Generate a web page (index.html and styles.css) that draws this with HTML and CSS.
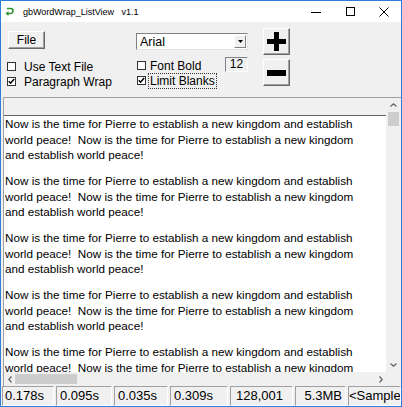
FILE: index.html
```html
<!DOCTYPE html>
<html lang="en">
<head>
    <meta charset="UTF-8">
    <meta name="viewport" content="width=device-width, initial-scale=1.0">
    <title>gbWordWrap_ListView</title>
    <link rel="stylesheet" href="styles.css">
</head>
<body>
<div class="window">
    <div class="titlebar">
        <svg class="app-icon" width="9" height="9" viewBox="0 0 9 9">
            <path d="M2 1.5 H5.5 A2.5 2.5 0 0 1 5.5 6.5 H3" fill="none" stroke="#2f8f2f" stroke-width="1.6"/>
            <polygon points="0.5,6.5 3.5,4 3.5,9" fill="#2f8f2f"/>
        </svg>
        <span class="title">gbWordWrap_ListView&nbsp;&nbsp;&nbsp;v1.1</span>
        <div class="caption-buttons">
            <span class="cap">
                <svg width="10" height="10" viewBox="0 0 10 10"><line x1="0" y1="5.5" x2="10" y2="5.5" stroke="#000" stroke-width="1"/></svg>
            </span>
            <span class="cap">
                <svg width="9" height="9" viewBox="0 0 9 9"><rect x="0.5" y="0.5" width="8" height="8" fill="none" stroke="#000" stroke-width="1"/></svg>
            </span>
            <span class="cap">
                <svg width="10" height="10" viewBox="0 0 10 10"><path d="M0.5 0.5 L9.5 9.5 M9.5 0.5 L0.5 9.5" stroke="#000" stroke-width="1"/></svg>
            </span>
        </div>
    </div>

    <div class="toolbar">
        <div class="col col-left">
            <button class="btn btn-file">File</button>
            <label class="check"><span class="box"></span><span class="label">Use Text File</span></label>
            <label class="check"><span class="box"><svg width="7" height="7" viewBox="0 0 7 7"><path d="M0.8 3.2 L2.6 5.2 L6.2 1" fill="none" stroke="#000" stroke-width="1.5"/></svg></span><span class="label">Paragraph Wrap</span></label>
        </div>
        <div class="col col-mid">
            <div class="combo">
                <span class="combo-text">Arial</span>
                <span class="combo-btn"><svg width="5" height="3" viewBox="0 0 5 3"><polygon points="0,0 5,0 2.5,3" fill="#000"/></svg></span>
            </div>
            <div class="row-bold">
                <label class="check"><span class="box"></span><span class="label">Font Bold</span></label>
                <span class="size-box">12</span>
            </div>
            <label class="check"><span class="box"><svg width="7" height="7" viewBox="0 0 7 7"><path d="M0.8 3.2 L2.6 5.2 L6.2 1" fill="none" stroke="#000" stroke-width="1.5"/></svg></span><span class="label focused">Limit Blanks</span></label>
        </div>
        <div class="col col-right">
            <button class="btn btn-big">
                <svg width="19" height="19" viewBox="0 0 19 19"><rect x="7" y="0" width="5" height="19" fill="#000"/><rect x="0" y="7" width="19" height="5" fill="#000"/></svg>
            </button>
            <button class="btn btn-big">
                <svg width="19" height="6" viewBox="0 0 19 6"><rect x="0" y="0" width="19" height="6" fill="#000"/></svg>
            </button>
        </div>
    </div>

    <div class="list-frame">
        <div class="list-header"></div>
        <div class="list-body">
            <p>Now is the time for Pierre to establish a new kingdom and establish world peace!&nbsp; Now is the time for Pierre to establish a new kingdom and establish world peace!</p>
            <p>Now is the time for Pierre to establish a new kingdom and establish world peace!&nbsp; Now is the time for Pierre to establish a new kingdom and establish world peace!</p>
            <p>Now is the time for Pierre to establish a new kingdom and establish world peace!&nbsp; Now is the time for Pierre to establish a new kingdom and establish world peace!</p>
            <p>Now is the time for Pierre to establish a new kingdom and establish world peace!&nbsp; Now is the time for Pierre to establish a new kingdom and establish world peace!</p>
            <p>Now is the time for Pierre to establish a new kingdom and establish world peace!&nbsp; Now is the time for Pierre to establish a new kingdom</p>
        </div>
        <div class="vscroll">
            <span class="arrow"><svg width="7" height="4" viewBox="0 0 7 4"><polyline points="0.5,3.5 3.5,0.8 6.5,3.5" fill="none" stroke="#606060" stroke-width="1.2"/></svg></span>
            <span class="vthumb"></span>
            <span class="track"></span>
            <span class="arrow"><svg width="7" height="4" viewBox="0 0 7 4"><polyline points="0.5,0.5 3.5,3.2 6.5,0.5" fill="none" stroke="#606060" stroke-width="1.2"/></svg></span>
        </div>
        <div class="hscroll">
            <span class="harrow"><svg width="4" height="7" viewBox="0 0 4 7"><polyline points="3.5,0.5 0.8,3.5 3.5,6.5" fill="none" stroke="#606060" stroke-width="1.2"/></svg></span>
            <span class="hthumb"></span>
            <span class="track"></span>
            <span class="harrow"><svg width="4" height="7" viewBox="0 0 4 7"><polyline points="0.5,0.5 3.2,3.5 0.5,6.5" fill="none" stroke="#606060" stroke-width="1.2"/></svg></span>
        </div>
        <div class="corner"></div>
    </div>

    <div class="statusbar">
        <span class="panel p1">0.178s</span>
        <span class="panel p2">0.095s</span>
        <span class="panel p3">0.035s</span>
        <span class="panel p4">0.309s</span>
        <span class="panel p5">128,001</span>
        <span class="panel p6">5.3MB</span>
        <span class="panel p7">&lt;Sample text&gt;</span>
    </div>
</div>
</body>
</html>
```

FILE: styles.css
```css
* {
    box-sizing: border-box;
}
body {
    margin: 0;
    background: #f0f0f0;
    font-family: "Liberation Sans", Arial, sans-serif;
    color: #000;
}
.window {
    width: 402px;
    height: 407px;
    border: 1px solid #2d7ed6;
    background: #f0f0f0;
    display: flex;
    flex-direction: column;
    overflow: hidden;
}

/* title bar */
.titlebar {
    flex: none;
    height: 21px;
    background: #fff;
    display: flex;
    align-items: center;
}
.app-icon {
    margin-left: 4px;
}
.title {
    margin-left: 9px;
    font-size: 9px;
}
.caption-buttons {
    margin-left: auto;
    display: flex;
}
.cap {
    width: 34px;
    height: 21px;
    display: flex;
    align-items: center;
    justify-content: center;
}

/* controls */
.toolbar {
    flex: none;
    height: 75px;
    display: flex;
}
.col {
    display: flex;
    flex-direction: column;
    align-items: flex-start;
}
.col-left {
    width: 135px;
    padding-left: 6px;
}
.col-mid {
    width: 127px;
}
.btn {
    font-family: "Liberation Sans", Arial, sans-serif;
    font-size: 12px;
    background: #f0f0f0;
    border: 1px solid;
    border-color: #fff #696969 #696969 #fff;
    box-shadow: inset -1px -1px #a0a0a0;
    padding: 0;
    display: flex;
    align-items: center;
    justify-content: center;
}
.btn-file {
    margin: 9px 0 0 1px;
    width: 37px;
    height: 18px;
}
.check {
    display: flex;
    align-items: center;
    height: 15px;
    font-size: 12px;
}
.col-left .check {
    gap: 6px;
}
.col-left .check:first-of-type {
    margin-top: 10px;
}
.col-mid .check {
    gap: 2px;
    margin-left: 1px;
}
.box {
    width: 9px;
    height: 9px;
    border: 1px solid #333;
    background: #fff;
    display: flex;
    align-items: center;
    justify-content: center;
}
.label {
    border: 1px dotted transparent;
    padding: 0 1px;
    line-height: 14px;
}
.label.focused {
    border-color: #333;
}
.combo {
    margin-top: 11px;
    width: 112px;
    height: 17px;
    background: #fff;
    border: 1px solid;
    border-color: #828282 #e3e3e3 #e3e3e3 #828282;
    display: flex;
    align-items: center;
}
.combo-text {
    flex: 1;
    padding-left: 3px;
    font-size: 12.5px;
}
.combo-btn {
    width: 12px;
    height: 13px;
    margin-right: 1px;
    background: #f0f0f0;
    border: 1px solid;
    border-color: #fff #828282 #828282 #fff;
    display: flex;
    align-items: center;
    justify-content: center;
}
.row-bold {
    margin-top: 7px;
    width: 112px;
    height: 16px;
    display: flex;
    align-items: flex-end;
    justify-content: space-between;
}
.size-box {
    align-self: flex-start;
    width: 23px;
    height: 15px;
    border: 1px solid;
    border-color: #828282 #fff #fff #828282;
    font-size: 12px;
    line-height: 13px;
    text-align: center;
}
.col-right {
    padding-top: 6px;
    gap: 4px;
}
.btn-big {
    width: 27px;
    height: 27px;
}

/* list view */
.list-frame {
    flex: none;
    height: 289px;
    margin-left: 2px;
    border-top: 1px solid #a0a0a0;
    border-left: 1px solid #a0a0a0;
    display: grid;
    grid-template-columns: 1fr 15px;
    grid-template-rows: 18px 256px 14px;
}
.list-header {
    grid-row: 1;
    grid-column: 1;
    background: #f0f0f0;
    border-bottom: 1px solid #646464;
}
.list-body {
    grid-row: 2;
    grid-column: 1;
    background: #fff;
    overflow: hidden;
    padding-left: 1px;
    font-size: 11.7px;
    line-height: 15.5px;
}
.list-body p {
    margin: 0 0 10.5px;
    width: 360px;
}
.vscroll {
    grid-row: 1 / 3;
    grid-column: 2;
    background: #f0f0f0;
    display: flex;
    flex-direction: column;
}
.arrow {
    height: 14px;
    display: flex;
    align-items: center;
    justify-content: center;
}
.vthumb {
    height: 14px;
    width: 11px;
    margin-left: 2px;
    background: #cdcdcd;
}
.track {
    flex: 1;
}
.hscroll {
    grid-row: 3;
    grid-column: 1;
    background: #f0f0f0;
    display: flex;
    align-items: center;
}
.harrow {
    width: 11px;
    height: 14px;
    display: flex;
    align-items: center;
    justify-content: center;
}
.hthumb {
    width: 62px;
    height: 10px;
    background: #cdcdcd;
}
.corner {
    grid-row: 3;
    grid-column: 2;
    background: #f0f0f0;
}

/* status bar */
.statusbar {
    flex: none;
    height: 20px;
    display: flex;
    gap: 2px;
    padding-left: 1px;
}
.panel {
    height: 20px;
    border: 1px solid;
    border-color: #a0a0a0 #fff #fff #a0a0a0;
    font-size: 13px;
    line-height: 18px;
    padding-left: 3px;
    white-space: nowrap;
    overflow: hidden;
}
.p1 { width: 52px; padding-left: 2px; }
.p2 { width: 56px; }
.p3 { width: 54px; }
.p4 { width: 58px; }
.p5 { width: 63px; padding-left: 5px; }
.p6 { width: 51px; text-align: right; padding-right: 3px; }
.p7 { flex: 1; padding-left: 0; }
```
